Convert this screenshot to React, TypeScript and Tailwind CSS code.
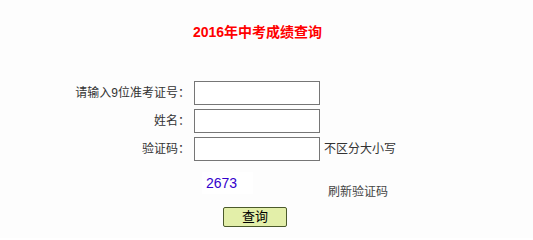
export default function App() {
  return (
    <div className="min-h-[238px] w-[533px] bg-[#fdfdfd] text-[12px] text-[#333] font-['Liberation_Sans','Noto_Sans_CJK_SC',sans-serif]">
      <h1 className="pt-[22px] pr-[18px] text-center text-[14px] leading-[20px] font-bold text-[#ff0000]">
        2016年中考成绩查询
      </h1>

      <div className="mt-[39px] grid grid-cols-[190px_126px_1fr] gap-x-[4px] gap-y-[4px]">
        <label className="flex h-[24px] items-center justify-end">请输入9位准考证号：</label>
        <input className="h-[24px] border border-[#767676] bg-white" />
        <span />

        <label className="flex h-[24px] items-center justify-end">姓名：</label>
        <input className="h-[24px] border border-[#767676] bg-white" />
        <span />

        <label className="flex h-[24px] items-center justify-end">验证码：</label>
        <input className="h-[24px] border border-[#767676] bg-white" />
        <span className="flex h-[24px] items-center">不区分大小写</span>
      </div>

      <div className="mt-[11px] ml-[202px] flex items-end">
        <div className="h-[22px] w-[51px] bg-white pl-[4px] text-[14px] leading-[22px] text-[#3300cc] font-['Liberation_Sans',sans-serif]">
          2673
        </div>
        <span className="ml-[75px] mb-[-6px] leading-[16px] text-[#444]">刷新验证码</span>
      </div>

      <div className="mt-[13px] ml-[223px]">
        <button className="flex h-[20px] w-[64px] items-center justify-center rounded-[2px] border border-[#4b5a2b] bg-[#e3efa9] text-[13px] text-black">
          查询
        </button>
      </div>
    </div>
  );
}
